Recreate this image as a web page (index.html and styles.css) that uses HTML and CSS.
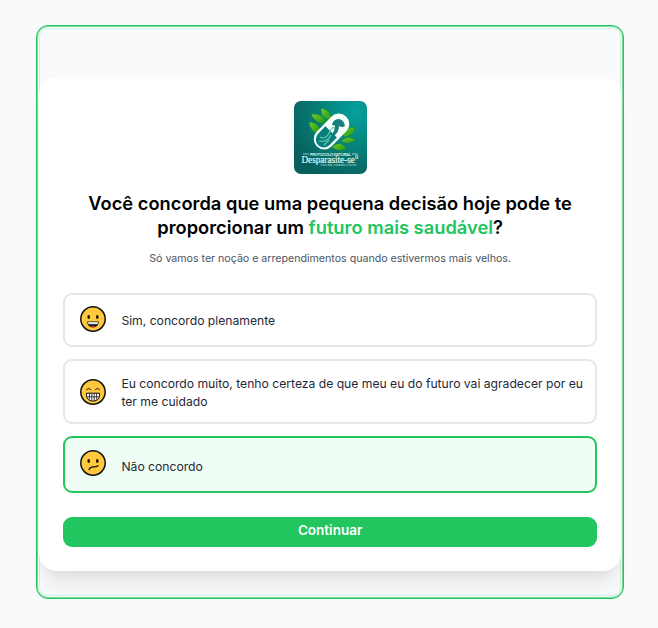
FILE: index.html
```html
<!DOCTYPE html>
<html lang="pt-BR">
<head>
<meta charset="utf-8">
<title>Desparasite-se</title>
<link rel="stylesheet" href="styles.css">
</head>
<body>
<main class="frame">
  <section class="card">
    <svg class="logo" viewBox="0 0 73 73">
      <defs>
        <radialGradient id="teal" cx=".85" cy=".15" r="1"><stop offset="0" stop-color="#05a09c"/><stop offset=".5" stop-color="#078079"/><stop offset="1" stop-color="#075e5a"/></radialGradient>
        <linearGradient id="leaf" x1="0" y1="0" x2="1" y2="1"><stop offset="0" stop-color="#75cf25"/><stop offset="1" stop-color="#17931e"/></linearGradient>
      </defs>
      <rect width="73" height="73" rx="7" fill="url(#teal)"/>
      <g fill="url(#leaf)" stroke="#087b37" stroke-width=".4">
        <path d="M37 20Q26 17 27 7Q39 10 37 20Z"/>
        <path d="M32 23Q21 23 17 13Q31 12 32 23Z"/>
        <path d="M25 33Q16 31 15 21Q28 22 25 33Z"/>
        <path d="M49 36Q51 25 61 26Q61 35 49 36Z"/>
        <path d="M47 40Q55 33 62 39Q54 45 47 40Z"/>
        <path d="M38 46Q46 38 53 48Q44 52 38 46Z"/>
      </g>
      <g transform="rotate(-46 37.5 30.5)">
        <rect x="16.5" y="20" width="42" height="21" rx="10.5" fill="#f7fffb"/>
        <path d="M37 22.5H26.5a8 8 0 0 0 0 16H37Z" fill="#087f7b"/>
      </g>
      <path d="M26 36Q32 39 35 32T41 27M25 40Q33 42 37 34M30 44L35 39" fill="none" stroke="#64c9b9" stroke-width="1.2"/>
      <path d="M38 23Q40 18 45 18Q50 19 51 25Q48 27 45 25Q45 31 40 35L37 34Q41 30 41 24Q39 26 38 23Z" fill="#14817c"/>
      <path d="M9 53h6M58 53h6" stroke="#d9f2ef" stroke-width=".7"/>
      <text class="logo-top" x="36.5" y="54.7" text-anchor="middle" textLength="41">PROTOCOLO NATURAL</text>
      <text class="logo-name" x="36" y="62" text-anchor="middle" textLength="57" lengthAdjust="spacingAndGlyphs">Desparasite-se°</text>
      <text class="logo-sub" x="44.5" y="65.3" text-anchor="middle" textLength="36">PURO BEM, HARMONIA E SAÚDE</text>
    </svg>
    <h1 class="title">Você concorda que uma pequena decisão hoje pode te proporcionar um <span class="accent">futuro mais saudável</span>?</h1>
    <p class="subtitle">Só vamos ter noção e arrependimentos quando estivermos mais velhos.</p>
    <div class="options">
      <div class="option option-first">
        <svg class="face" viewBox="0 0 26 26"><circle cx="13" cy="13" r="12.2" fill="#ffc83d" stroke="#111" stroke-width="1.5"/><ellipse cx="8.7" cy="11.1" rx="1.3" ry="2" fill="#111"/><ellipse cx="17.3" cy="11.1" rx="1.3" ry="2" fill="#111"/><path d="M7.2 15.5h11.6c0 3.6-2.4 5.9-5.8 5.9s-5.8-2.3-5.8-5.9Z" fill="#111"/><path d="M7.8 16h10.4l-.7 2.2H8.5Z" fill="#ddd"/><path d="M10.3 20.7q2.7-2.1 5.4 0-2.7 1.2-5.4 0Z" fill="#e5343f"/></svg>
        <span class="label">Sim, concordo plenamente</span>
      </div>
      <div class="option option-second">
        <svg class="face" viewBox="0 0 26 26"><circle cx="13" cy="13" r="12.2" fill="#ffc83d" stroke="#111" stroke-width="1.5"/><path d="M6.4 11.2q2.2-3.5 4.4 0M15.2 11.2q2.2-3.5 4.4 0" fill="none" stroke="#111" stroke-width="1"/><path d="M6.5 14.2h13v2.2a5.6 5.6 0 0 1-5.6 5.6h-1.8a5.6 5.6 0 0 1-5.6-5.6Z" fill="#fff" stroke="#111" stroke-width="1"/><path d="M7 17.8h12M9.4 14.2v6.3M11.8 14.2v7.6M14.2 14.2v7.6M16.6 14.2v6.3" stroke="#111" stroke-width=".8"/></svg>
        <span class="label">Eu concordo muito, tenho certeza de que meu eu do futuro vai agradecer por eu ter me cuidado</span>
      </div>
      <div class="option option-selected">
        <svg class="face" viewBox="0 0 26 26"><circle cx="13" cy="13" r="12.2" fill="#ffc83d" stroke="#111" stroke-width="1.5"/><ellipse cx="8.7" cy="11" rx="1.3" ry="2" fill="#111"/><ellipse cx="17.3" cy="11" rx="1.3" ry="2" fill="#111"/><path d="M9 19.5q1.2-2.7 4.4-2.7 3.3.1 4.6-1.1" fill="none" stroke="#111" stroke-width="1.3" stroke-linecap="round"/></svg>
        <span class="label">Não concordo</span>
      </div>
    </div>
    <button class="continue">Continuar</button>
  </section>
</main>
</body>
</html>
```
FILE: styles.css
```css
* { box-sizing: border-box; }
body { margin: 0; height: 628px; padding: 25px 34px 29px 36px; background: #f9fafb; font-family: Inter, sans-serif; overflow: hidden; }
.frame { height: 574px; padding: 50px 1px 0; border: 1px solid #22c55e; border-radius: 12px; box-shadow: inset 0 0 0 1px #79dc9c, inset 0 0 0 2px #f9fafb, inset 0 0 0 3px #d5f3df; }
.card { height: 494.5px; margin: .5px 1px 0; padding: 25px 24.2px 25px 24.4px; border-radius: 18px; background: #fff; box-shadow: 0 19px 19px -4px rgba(0,0,0,.07), 0 7px 8px -4px rgba(0,0,0,.06); }
.logo { display: block; width: 73px; height: 73px; margin: -.5px auto 0; }
.logo-top { font: 600 4px Inter, sans-serif; fill: #d9f2ef; }
.logo-name { font: 400 9.5px "Liberation Serif", serif; fill: #e9faf7; stroke: #e9faf7; stroke-width: .15px; }
.logo-sub { font: 600 2px Inter, sans-serif; fill: #b4ddd9; }
.title { margin: 17px 0 0; color: #000; font-size: 18.3px; line-height: 24.4px; font-weight: 600; letter-spacing: .01px; text-align: center; }
.accent { color: #22c55e; }
.subtitle { margin: 11px 0 0; color: #4b5563; font-size: 10.67px; line-height: 15px; letter-spacing: -.02px; text-align: center; }
.options { display: grid; gap: 12px; margin-top: 27px; }
.option { display: flex; align-items: center; gap: 15px; height: 54.5px; padding: 0 8px 0 15px; border: 2px solid #e5e7eb; border-radius: 9px; }
.option-second { height: 65px; }
.option-selected { height: 56.5px; border-color: #22c55e; background: #f0fdf4; }
.face { flex: none; width: 26px; height: 26px; }
.option-first .face { margin-bottom: 3px; }
.option-selected .face { margin-bottom: 3px; }
.label { color: #1f2937; font-size: 12.19px; line-height: 18.3px; letter-spacing: -.02px; }
.option-first .label { margin-top: 2px; }
.option-second .label { margin-top: 2px; }
.option-selected .label { margin-top: 5px; }
.continue { display: block; width: 100%; height: 30px; margin-top: 24px; padding: 0 0 3px; border: 0; border-radius: 9px; background: #22c55e; color: #fff; font: 600 13.5px/18px Inter, sans-serif; }
```
